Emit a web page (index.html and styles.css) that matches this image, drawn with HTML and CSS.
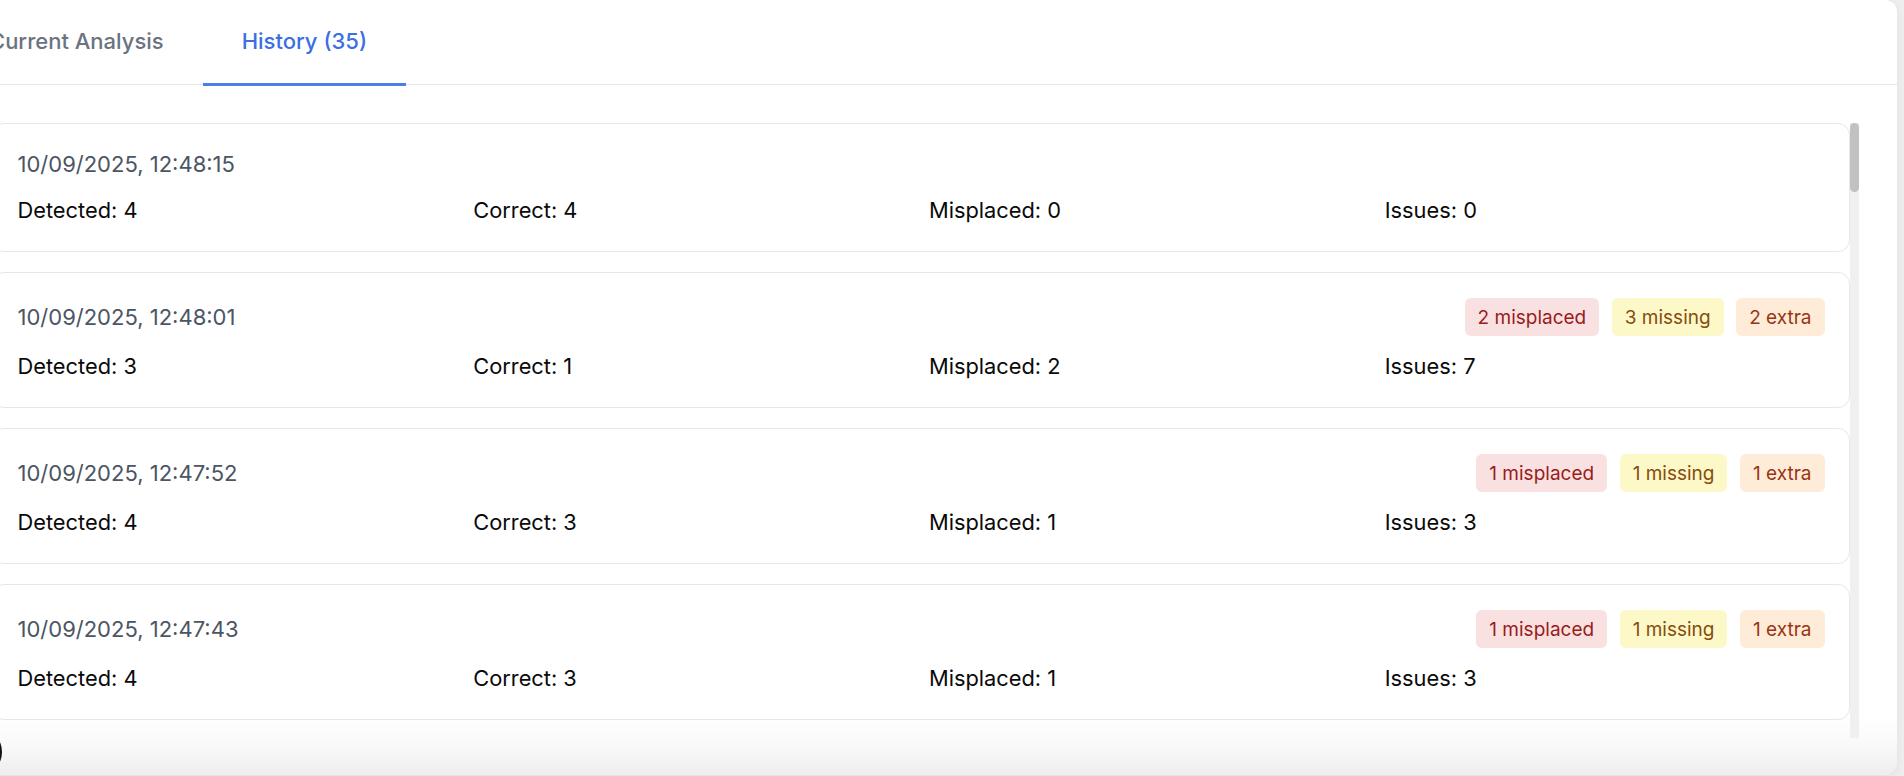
FILE: index.html
```html
<!DOCTYPE html>
<html lang="en">
<head>
<meta charset="utf-8">
<title>History</title>
<link rel="stylesheet" href="styles.css">
</head>
<body>
<div class="panel">
  <nav class="tabs">
    <button class="tab">Current Analysis</button>
    <button class="tab active">History (35)</button>
  </nav>
  <div class="list-wrap">
    <div class="list">
      <div class="card">
        <div class="card-head"><span class="date">10/09/2025, 12:48:15</span></div>
        <div class="stats"><span>Detected: 4</span><span>Correct: 4</span><span>Misplaced: 0</span><span>Issues: 0</span></div>
      </div>
      <div class="card">
        <div class="card-head"><span class="date">10/09/2025, 12:48:01</span>
          <div class="badges"><span class="badge red">2 misplaced</span><span class="badge yellow">3 missing</span><span class="badge orange">2 extra</span></div></div>
        <div class="stats"><span>Detected: 3</span><span>Correct: 1</span><span>Misplaced: 2</span><span>Issues: 7</span></div>
      </div>
      <div class="card">
        <div class="card-head"><span class="date">10/09/2025, 12:47:52</span>
          <div class="badges"><span class="badge red">1 misplaced</span><span class="badge yellow">1 missing</span><span class="badge orange">1 extra</span></div></div>
        <div class="stats"><span>Detected: 4</span><span>Correct: 3</span><span>Misplaced: 1</span><span>Issues: 3</span></div>
      </div>
      <div class="card">
        <div class="card-head"><span class="date">10/09/2025, 12:47:43</span>
          <div class="badges"><span class="badge red">1 misplaced</span><span class="badge yellow">1 missing</span><span class="badge orange">1 extra</span></div></div>
        <div class="stats"><span>Detected: 4</span><span>Correct: 3</span><span>Misplaced: 1</span><span>Issues: 3</span></div>
      </div>
    </div>
    <div class="scrollbar"><div class="thumb"></div></div>
  </div>
</div>
<div class="fab" aria-hidden="true"></div>
</body>
</html>
```
FILE: styles.css
```css
* { box-sizing: border-box; }
html, body { margin: 0; height: 100%; }
body {
  background: #eeeef0;
  font-family: Inter, "Noto Sans", "Liberation Sans", sans-serif;
  color: #111;
  overflow: hidden;
}
.panel {
  width: 1943px;
  height: 775px;
  margin-left: -46px;
  background: linear-gradient(to bottom, #ffffff 0, #ffffff 716px, #f9f9f9 745px, #eeeeee 775px);
  border-radius: 0 12px 12px 0;
  box-shadow: 0 2px 10px rgba(0, 0, 0, 0.06);
  display: flex;
  flex-direction: column;
}
.tabs {
  display: flex;
  height: 85px;
  margin-left: -4px;
  border-bottom: 1px solid #e5e7eb;
}
.tab {
  appearance: none;
  background: none;
  border: 0;
  border-bottom: 3px solid transparent;
  margin: 0 0 -2px 0;
  height: 86px;
  padding: 27px 39px 27px;
  font-family: inherit;
  font-size: 22px;
  line-height: 29px;
  font-weight: 500;
  color: #6b7280;
  white-space: nowrap;
}
.tab.active {
  color: #3b6fe3;
  border-bottom-color: #4a7fe8;
}
.list-wrap {
  margin: 38px 38px 0 38px;
  height: 615px;
  display: flex;
}
.list {
  flex: 1;
  min-width: 0;
  overflow: hidden;
  display: flex;
  flex-direction: column;
  gap: 20px;
}
.scrollbar {
  flex: none;
  width: 9px;
  background: #f0f0f0;
}
.thumb {
  width: 9px;
  height: 69px;
  background: #c1c1c1;
  border-radius: 5px;
}
.card {
  flex: none;
  background: #fff;
  border: 1px solid #e5e7eb;
  border-radius: 12px;
  padding: 25px 24.5px;
}
.card-head {
  display: flex;
  justify-content: space-between;
  align-items: center;
  min-height: 31px;
  margin-bottom: 14px;
}
.date {
  font-size: 22px;
  line-height: 31px;
  color: #4b5563;
}
.badges {
  display: flex;
  gap: 12.5px;
}
.badge {
  font-size: 19px;
  line-height: 25px;
  padding: 6.5px 13px;
  border-radius: 6px;
}
.badge.red { background: #fae1e1; color: #991b1b; }
.badge.yellow { background: #fdf8c8; color: #854d0e; }
.badge.orange { background: #feecd8; color: #9a3412; }
.stats {
  display: grid;
  grid-template-columns: repeat(4, 1fr);
  gap: 16px;
  font-size: 21.8px;
  line-height: 32px;
  color: #0a0a0a;
}
.fab {
  position: fixed;
  left: -46px;
  top: 728px;
  width: 48px;
  height: 48px;
  border: 2.5px solid #111;
  border-radius: 50%;
}
```
